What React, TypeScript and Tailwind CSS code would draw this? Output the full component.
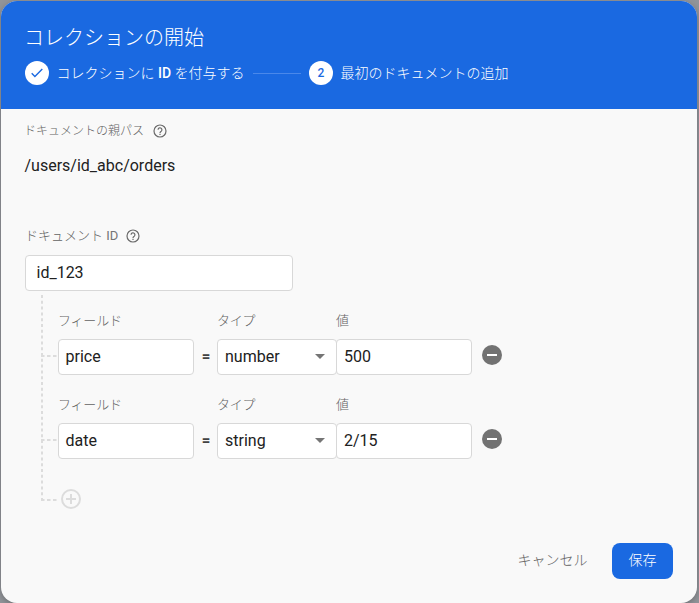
import React from "react";

function HelpIcon() {
  return (
    <svg width="14" height="14" viewBox="0 0 14 14" fill="none" className="shrink-0">
      <circle cx="7" cy="7" r="6" stroke="#6a6a6a" strokeWidth="1.2" />
      <path d="M5.1 5.7a1.9 1.9 0 1 1 3.2 1.4C7.5 7.8 7 8 7 8.9" stroke="#6a6a6a" strokeWidth="1.2" />
      <path d="M6.4 9.7h1.2v1.2H6.4z" fill="#6a6a6a" />
    </svg>
  );
}

function TreeLines() {
  return (
    <svg width="33" height="220" viewBox="0 0 33 220" className="shrink-0" fill="none" stroke="#dcdcdc" strokeWidth="2">
      <path d="M17 4V210" strokeDasharray="3 2.8" />
      <path d="M16 65H33M16 149H33M16 209H33" strokeDasharray="3.5 2.5" />
    </svg>
  );
}

const label = "block h-4 text-[13px] leading-4 font-light tracking-[-0.2px] text-[#626262]";
const box = "flex h-9 items-center rounded-[4px] border border-[#d8d8d8] bg-white px-[7px] text-base text-[#212121]";

function FieldRow({ name, type, value }: { name: string; type: string; value: string }) {
  return (
    <div className="flex h-[84px] items-end pb-[21px]">
      <div className="w-[136px]">
        <span className={label}>フィールド</span>
        <div className={`${box} mt-[10.5px]`}>
          <span className="-ml-[0.5px]">{name}</span>
        </div>
      </div>
      <span className="flex h-9 w-[23px] items-center justify-center pb-0.5 pl-px text-[15px] font-bold text-[#424242]">=</span>
      <div className="w-[120px]">
        <span className={label}>タイプ</span>
        <div className={`${box} mt-[10.5px] justify-between`}>
          {type}
          <svg width="10" height="5" viewBox="0 0 10 5" className="mr-[4px] mb-px">
            <path d="M0 0h10L5 5z" fill="#757575" />
          </svg>
        </div>
      </div>
      <div className="-ml-px w-[136px]">
        <span className={label}>値</span>
        <div className={`${box} mt-[10.5px]`}>{value}</div>
      </div>
      <svg width="20" height="20" viewBox="0 0 20 20" className="mb-[10px] ml-[10px]">
        <circle cx="10" cy="10" r="10" fill="#727272" />
        <path d="M5 9h10v2H5z" fill="#fff" />
      </svg>
    </div>
  );
}

export default function App() {
  return (
    <div className="h-[603px] w-[699px] overflow-hidden bg-[#919499] pl-px pt-px font-[Roboto,'Noto_Sans_CJK_JP',sans-serif]">
      <div className="flex h-[602px] w-[696px] flex-col overflow-hidden rounded-[16px] bg-[#f9f9f9] shadow-[0_2px_6px_rgba(0,0,0,0.25)]">
        <header className="h-[108px] shrink-0 bg-[#1a69e1] px-6 pt-[25px] text-white">
          <h1 className="-ml-px h-6 text-xl leading-6 font-light">コレクションの開始</h1>
          <div className="mt-[11px] flex h-6 items-center text-sm font-light">
            <span className="flex size-6 items-center justify-center rounded-full bg-white">
              <svg width="12" height="10" viewBox="0 0 12 10" fill="none" stroke="#1a69e1" strokeWidth="1.4">
                <path d="M.7 5.2l3.2 3.2L11.3 1" />
              </svg>
            </span>
            <span className="ml-[7.5px] w-[188.5px] whitespace-nowrap">
              コレクションに <span className="font-medium">ID</span> を付与する
            </span>
            <span className="mx-2 h-px w-12 bg-[#4a88ea]" />
            <span className="flex size-6 items-center justify-center rounded-full bg-white text-xs font-medium text-[#1a69e1]">2</span>
            <span className="ml-[7.5px]">最初のドキュメントの追加</span>
          </div>
        </header>
        <main className="flex-1 px-6 pt-[14px]">
          <div className="flex h-4 items-center gap-[9px] text-xs leading-4 font-light text-[#626262]">
            <span className="-ml-px">ドキュメントの親パス</span> <HelpIcon />
          </div>
          <p className="-ml-[0.5px] mt-[15px] h-6 text-base leading-6 text-[#212121]">/users/id_abc/orders</p>
          <div className="mt-[50px] flex h-4 items-center gap-2 text-[13px] leading-4 font-light text-[#626262]">
            <span>
              ドキュメント <span className="font-normal text-[#757575]">ID</span>
            </span>
            <HelpIcon />
          </div>
          <div className={`${box} mt-[11px] w-[268px] pl-[10.5px]`}>id_123</div>
          <div className="flex h-[220px]">
            <TreeLines />
            <div className="pt-[21px]">
              <FieldRow name="price" type="number" value="500" />
              <FieldRow name="date" type="string" value="2/15" />
              <svg width="20" height="20" viewBox="0 0 20 20" fill="none" stroke="#dcdcdc" strokeWidth="2" className="ml-[2.5px] mt-[9px]">
                <circle cx="10" cy="10" r="9" />
                <path d="M10 5v10M5 10h10" />
              </svg>
            </div>
          </div>
        </main>
        <footer className="flex h-[60px] shrink-0 items-start justify-end px-6 text-sm font-light">
          <button className="-mt-px h-9 px-[24.5px] text-[#626262]">キャンセル</button>
          <button className="h-9 w-[61px] rounded-lg bg-[#1a69e1] pb-0.5 text-white">保存</button>
        </footer>
      </div>
    </div>
  );
}
